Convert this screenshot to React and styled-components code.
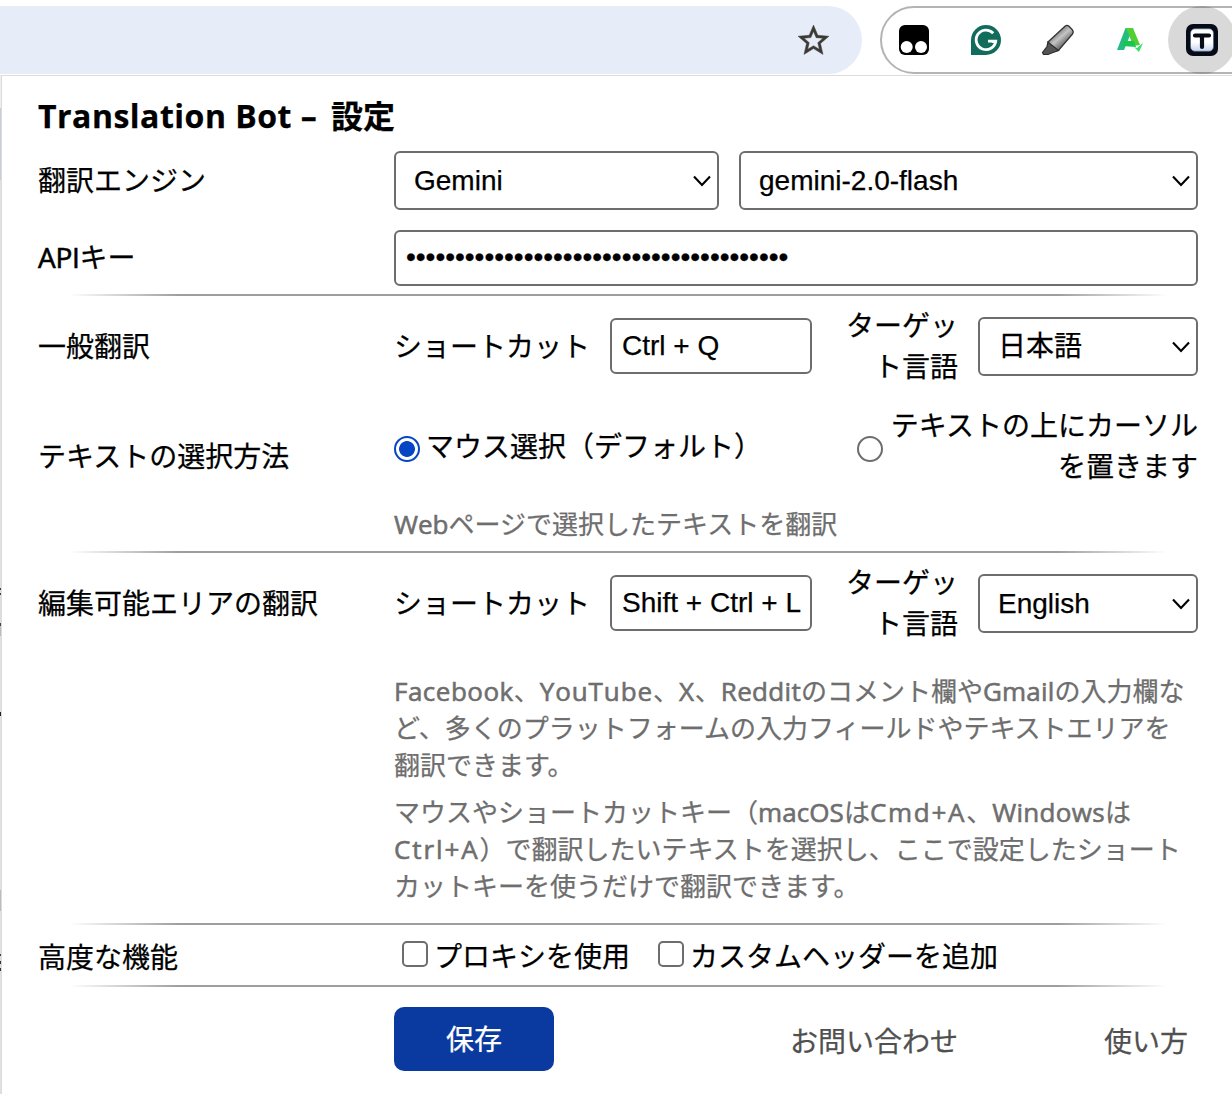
import React from "react";
import styled, { createGlobalStyle } from "styled-components";

const Global = createGlobalStyle`
  * { box-sizing: border-box; }
  html, body { margin: 0; background: #fff; }
  body {
    width: 1232px;
    height: 1094px;
    overflow: hidden;
    color: #000;
    font: 28px/41px "Noto Sans CJK JP", sans-serif;
    text-spacing-trim: space-all;
    white-space: nowrap;
    -webkit-text-stroke: 0.25px currentColor;
  }
  p, h1 { margin: 0; }
`;

const Page = styled.div`
  display: flex;
  flex-direction: column;
  width: 1232px;
  height: 1094px;
  overflow: hidden;
`;

const Toolbar = styled.header`
  display: flex;
  gap: 18px;
  height: 75px;
  padding-top: 6px;
  overflow: hidden;
  flex: none;
`;

const AddressBar = styled.div`
  display: flex;
  flex: none;
  align-items: center;
  justify-content: flex-end;
  width: 862px;
  height: 68px;
  padding-right: 30px;
  border-radius: 0 34px 34px 0;
  background: #e6ecf8;
  svg { display: block; }
`;

const Extensions = styled.div`
  display: flex;
  align-items: center;
  flex: none;
  width: 420px;
  height: 68px;
  border: 2px solid #b4b4b4;
  border-radius: 34px;
`;

const ExtensionSlot = styled.div`
  display: flex;
  align-items: center;
  justify-content: center;
  flex: none;
  width: 72px;
  height: 68px;
  &:first-child { margin-left: -4px; }
`;

const ActiveSlot = styled(ExtensionSlot)`
  width: 68px;
  margin-left: 2px;
  border-radius: 50%;
  background: rgba(0, 0, 0, 0.15);
`;

const Body = styled.div`
  display: flex;
  flex: 1;
`;

const PageEdge = styled.div`
  flex: none;
  width: 2px;
  border-right: 1px solid #dcdcdc;
  background: linear-gradient(#eee 0 33px, #c8ccd8 33px 105px, #e0e0e0 105px 513px,
    #444 513px 515px, #ddd 515px 518px, #444 518px 520px, #ddd 520px 548px, #444 548px 551px,
    #bbb 551px 561px, #e0e0e0 561px 637px, #222 637px 641px, #e0e0e0 641px 815px,
    #bbb 815px 836px, #e0e0e0 836px 879px, #444 879px 881px, #ddd 881px 886px,
    #333 886px 889px, #ddd 889px 893px, #333 893px 896px, #e0e0e0 896px);
`;

const Panel = styled.main`
  flex: 1;
  padding: 0 34px 0 36px;
  border-top: 1px solid #dcdcdc;
`;

const Title = styled.h1`
  height: 75px;
  padding-top: 19px;
  font: 700 32px/41px "Open Sans", "Noto Sans CJK JP", sans-serif;
  letter-spacing: ${(p) => p.$track};
  span { margin-left: 5px; letter-spacing: 0; }
`;

const Row = styled.section`
  display: grid;
  grid-template-columns: 356px 804px;
  align-items: center;
  height: ${(p) => p.$height}px;
  margin-bottom: ${(p) => p.$after || 0}px;
`;

const Label = styled.div`
  padding-top: ${(p) => p.$drop || 0}px;
  padding-bottom: 3px;
`;

const Fields = styled.div`
  display: flex;
  align-items: center;
  gap: 20px;
`;

const Select = styled.div`
  display: flex;
  align-items: center;
  justify-content: space-between;
  width: ${(p) => p.$width}px;
  height: 59px;
  padding: 0 4px 0 18px;
  border: 2px solid #6d6d6d;
  border-radius: 6px;
  font: 28px/41px "Liberation Sans", "Noto Sans CJK JP", sans-serif;
`;

const Input = styled.input`
  width: ${(p) => p.$width}px;
  height: 56px;
  padding: 0 6px 2px 10px;
  border: 2px solid #6d6d6d;
  border-radius: 6px;
  outline: none;
  color: #000;
  font: 28px "Liberation Sans", sans-serif;
`;

const ShortcutInput = styled(Input)`
  margin-bottom: 1px;
  padding-bottom: 1px;
`;

const ShortcutLabel = styled.span`
  padding-bottom: 3px;
`;

const TargetLabel = styled.div`
  width: 126px;
  padding-bottom: 3px;
  text-align: right;
`;

const Divider = styled.div`
  height: 2px;
  margin: 0 32px 0 31px;
  background: linear-gradient(90deg, transparent, #9e9e9e 10%, #9e9e9e 90%, transparent);
`;

const Choices = styled.div`
  display: flex;
  align-items: center;
  justify-content: space-between;
  padding-bottom: 4px;
`;

const Choice = styled.label`
  display: flex;
  align-items: center;
  gap: ${(p) => p.$gap || 6}px;
  text-align: right;
`;

const Radio = styled.span`
  width: 26px;
  height: 26px;
  margin-top: 7px;
  border: 2px solid ${(p) => (p.$on ? "#0646c4" : "#6d6d6d")};
  border-radius: 50%;
  background: ${(p) => (p.$on ? "radial-gradient(circle, #0646c4 7.5px, #fff 8.3px)" : "#fff")};
`;

const Checks = styled.div`
  display: flex;
  gap: 28px;
  padding: 1px 0 0 8px;
`;

const CheckBox = styled.span`
  width: 26px;
  height: 26px;
  margin: 0 0 4px 0;
  border: 2px solid #6d6d6d;
  border-radius: 5px;
`;

const Hint = styled.div`
  padding-left: 356px;
  color: #6e6e6e;
  font-size: 26px;
  line-height: 37px;
  height: ${(p) => p.$height}px;
  padding-top: ${(p) => p.$top}px;
  p + p { margin-top: 10px; }
`;

const Latin = styled.span`
  font-family: "Open Sans", sans-serif;
  line-height: 1;
  letter-spacing: ${(p) => p.$track || 0}px;
  -webkit-text-stroke: 0.6px currentColor;
`;

const Footer = styled.footer`
  display: flex;
  align-items: center;
  height: 64px;
  margin-top: 20px;
  padding: 0 11px 0 356px;
`;

const SaveButton = styled.button`
  width: 160px;
  height: 64px;
  padding: 0 0 2px;
  border: 0;
  border-radius: 10px;
  background: #0a3a9f;
  color: #fff;
  font: 28px/41px "Noto Sans CJK JP", sans-serif;
`;

const FooterLink = styled.a`
  margin-left: ${(p) => p.$gap}px;
  padding-top: 2px;
  color: #505050;
`;

const Chevron = () => (
  <svg width="22" height="16" viewBox="0 0 22 16" fill="none">
    <path d="M3 3.5 11 12 19 3.5" stroke="#000" strokeWidth="2.1" />
  </svg>
);

const StarIcon = () => (
  <svg width="37" height="37" viewBox="0 0 24 24" fill="#3c3a37" stroke="#3c3a37" strokeWidth="0.3">
    <path d="M22 9.24l-7.19-.62L12 2 9.19 8.63 2 9.24l5.46 4.73L5.82 21 12 17.27 18.18 21l-1.63-7.03L22 9.24zM12 15.4l-3.76 2.27 1-4.28-3.32-2.88 4.38-.38L12 6.1l1.71 4.04 4.38.38-3.32 2.88 1 4.28L12 15.4z" />
  </svg>
);

const MonkeyIcon = () => (
  <svg width="32" height="32" viewBox="0 0 32 32">
    <rect x="1" y="1" width="30" height="30" rx="6" />
    <circle cx="8.7" cy="23" r="6" fill="#fff" />
    <circle cx="23" cy="23" r="6" fill="#fff" />
  </svg>
);

const GrammarIcon = () => (
  <svg width="32" height="32" viewBox="0 0 32 32" fill="none">
    <path d="M1 31V16A15 15 0 1 1 16 31Z" fill="#126c5b" />
    <path d="M23.2 9.2A9.8 9.8 0 1 0 25.7 17.2H18" stroke="#fff" strokeWidth="2.8" />
    <path d="M21.7 17.5H26.5" stroke="#fff" strokeWidth="2.8" />
  </svg>
);

const MarkerIcon = () => (
  <svg width="34" height="34" viewBox="0 0 34 34">
    <defs>
      <linearGradient id="barrel" x1="0.25" y1="0.2" x2="0.75" y2="0.8">
        <stop offset="0" stopColor="#666" />
        <stop offset="0.45" stopColor="#c4c4c4" />
        <stop offset="1" stopColor="#4a4a4a" />
      </linearGradient>
    </defs>
    <path d="M7 19 24 3.2Q26 1.5 28 3.2L31.5 7Q33 9 31.5 11L17.5 27.5 9 28.5Z" fill="url(#barrel)" stroke="#333" strokeWidth="1.3" />
    <path d="M7 19 6 23.5 1.5 29.5 2.5 31.5H7L12 29.5 17.5 27.5Z" fill="#555" stroke="#2d2d2d" strokeWidth="1.2" />
  </svg>
);

const LetterAIcon = () => (
  <svg width="28" height="28" viewBox="0 0 28 28">
    <path d="M1 24 9.5 2H17L13 12 8 24Z" fill="#24bd7f" />
    <path d="M10 2H17L24 19 17 20 13 9Z" fill="#52ce35" />
    <path d="M8 15H18L20 21 6 20Z" fill="#19c653" />
    <path d="M18 21 21 22 27 17 23 26Z" fill="#35df70" />
  </svg>
);

const TranslatorIcon = () => (
  <svg width="32" height="32" viewBox="0 0 32 32" fill="none">
    <defs>
      <linearGradient id="tile" x1="0" y1="0" x2="0" y2="1">
        <stop offset="0.6" stopColor="#fff" />
        <stop offset="1" stopColor="#c3d3ed" />
      </linearGradient>
    </defs>
    <rect width="32" height="32" rx="7" fill="#060b18" />
    <rect x="4.5" y="4.8" width="23" height="22.5" rx="4.5" fill="url(#tile)" stroke="#52617e" strokeWidth="0.7" />
    <path d="M9 11.5H23M16 12V23" stroke="#080c14" strokeWidth="4.2" strokeLinecap="round" />
  </svg>
);

const ShortcutRow = ({ name, shortcut, language }) => (
  <Row $height={101}>
    <Label>{name}</Label>
    <Fields>
      <ShortcutLabel>ショートカット</ShortcutLabel>
      <ShortcutInput $width={202} value={shortcut} readOnly />
      <TargetLabel>ターゲッ<br />ト言語</TargetLabel>
      <Select $width={220}>{language}<Chevron /></Select>
    </Fields>
  </Row>
);

export default function App() {
  return (
    <Page>
      <Global />
      <Toolbar>
        <AddressBar><StarIcon /></AddressBar>
        <Extensions>
          <ExtensionSlot><MonkeyIcon /></ExtensionSlot>
          <ExtensionSlot><GrammarIcon /></ExtensionSlot>
          <ExtensionSlot><MarkerIcon /></ExtensionSlot>
          <ExtensionSlot><LetterAIcon /></ExtensionSlot>
          <ActiveSlot><TranslatorIcon /></ActiveSlot>
        </Extensions>
      </Toolbar>
      <Body>
        <PageEdge />
        <Panel>
          <Title $track="0.5px">Translation Bot – <span>設定</span></Title>
          <Row $height={59} $after={20}>
            <Label>翻訳エンジン</Label>
            <Fields>
              <Select $width={325}>Gemini<Chevron /></Select>
              <Select $width={459}>gemini-2.0-flash<Chevron /></Select>
            </Fields>
          </Row>
          <Row $height={56} $after={8}>
            <Label><Latin $track={-0.3}>API</Latin>キー</Label>
            <Input type="password" $width={804} value={"x".repeat(39)} readOnly />
          </Row>
          <Divider />
          <ShortcutRow name="一般翻訳" shortcut="Ctrl + Q" language="日本語" />
          <Row $height={100}>
            <Label $drop={20}>テキストの選択方法</Label>
            <Choices>
              <Choice><Radio $on />マウス選択（デフォルト）</Choice>
              <Choice $gap={8}><Radio /><span>テキストの上にカーソル<br />を置きます</span></Choice>
            </Choices>
          </Row>
          <Hint $height={54} $top={7}>
            <p><Latin $track={0}>Web</Latin>ページで選択したテキストを翻訳</p>
          </Hint>
          <Divider />
          <ShortcutRow name="編集可能エリアの翻訳" shortcut="Shift + Ctrl + L" language="English" />
          <Hint $height={269} $top={17}>
            <p>
              <Latin $track={0.5}>Facebook</Latin>、<Latin $track={0.9}>YouTube</Latin>、<Latin $track={0.8}>X</Latin>、<Latin $track={0.3}>Reddit</Latin>のコメント欄や<Latin $track={0.2}>Gmail</Latin>の入力欄な<br />
              ど、多くのプラットフォームの入力フィールドやテキストエリアを<br />
              翻訳できます。
            </p>
            <p>
              マウスやショートカットキー（<Latin $track={0.1}>macOS</Latin>は<Latin $track={1.7}>Cmd+A</Latin>、<Latin $track={0.3}>Windows</Latin>は<br />
              <Latin $track={1.9}>Ctrl+A</Latin>）で翻訳したいテキストを選択し、ここで設定したショート<br />
              カットキーを使うだけで翻訳できます。
            </p>
          </Hint>
          <Divider />
          <Row $height={60}>
            <Label $drop={5}>高度な機能</Label>
            <Checks>
              <Choice><CheckBox /><span>プロキシを使用</span></Choice>
              <Choice><CheckBox /><span>カスタムヘッダーを追加</span></Choice>
            </Checks>
          </Row>
          <Divider />
          <Footer>
            <SaveButton>保存</SaveButton>
            <FooterLink $gap={236}>お問い合わせ</FooterLink>
            <FooterLink $gap={146}>使い方</FooterLink>
          </Footer>
        </Panel>
      </Body>
    </Page>
  );
}
